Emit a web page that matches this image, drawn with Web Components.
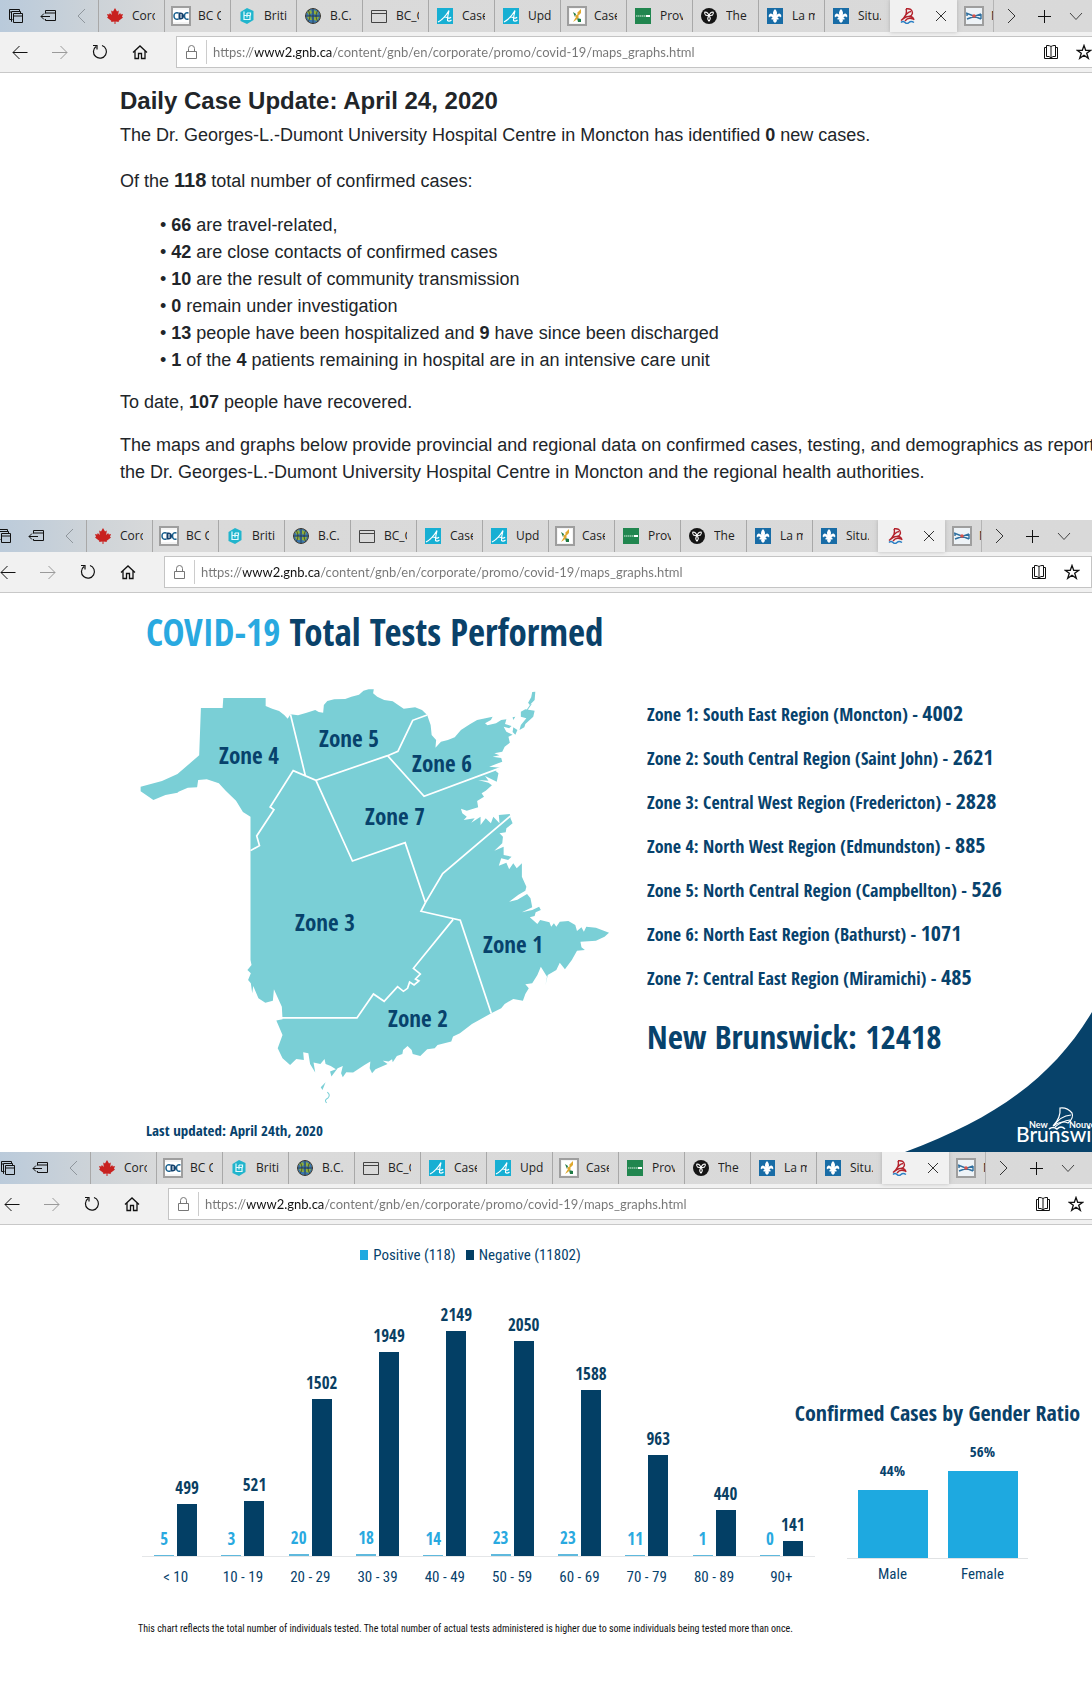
<!DOCTYPE html>
<html lang="en">
<head>
<meta charset="utf-8">
<title>New Brunswick COVID-19 maps and graphs</title>
<style>
  html { overflow-x: hidden; }
  body { margin: 0; background: #fff; overflow-x: hidden; }
</style>
</head>
<body>
<edge-window>
  <case-update></case-update>
</edge-window>
<edge-window style="--shift: -12px">
  <tests-infographic></tests-infographic>
</edge-window>
<edge-window style="--shift: -8px">
  <results-charts></results-charts>
</edge-window>

<template id="edge-window">
  <style>
    :host { display: block; overflow: hidden; font: 12px/16px "Open Sans", "Noto Sans", sans-serif; color: #222; }
    .chrome { width: calc(100% + 12px); margin-left: var(--shift, 0px); }
    button { all: unset; box-sizing: border-box; display: flex; align-items: center; justify-content: center; }
    svg { display: block; fill: none; stroke: #111; }
    .strip { display: flex; height: 32px; background: linear-gradient(90deg, #b9cadb, #cdd3d8 98px, #dadada 180px, #d9d9d9); }
    .tool { width: 32px; }
    .wide { width: 34px; }
    .nav { display: flex; align-items: center; height: 40px; background: #f1f1f1; border-bottom: 1px solid #c8c8c8; padding-left: 4px; }
    .nav > button { width: 40px; height: 32px; }
    .box { flex: 1; display: flex; align-items: center; height: 32px; box-sizing: border-box; margin-left: 12px; background: #fff; border: 1px solid #c4c4c4; padding-right: 3px; }
    .lock { width: 29px; display: flex; justify-content: center; }
    .url { flex: 1; min-width: 0; border: 0; border-left: 1px solid #ccc; outline: 0; padding: 0 0 0 6px; height: 24px; font: 13px/24px Lato, "Open Sans", sans-serif; color: #6e6e6e;
      background: linear-gradient(90deg, #767676 48px, #111 48px 125px, #767676 125px) text; -webkit-background-clip: text; -webkit-text-fill-color: transparent; }
    .box button { width: 33px; height: 28px; }
  </style>
  <div class="chrome">
    <div class="strip">
      <button class="tool" aria-label="Tabs you've set aside"><svg width="16" height="16" viewBox="0 0 16 16"><path d="M4.5 11.500H1.500V1.500H11.500V3.500M1.500 4H3M4 13.500H3.500V3.500H12.500V5.500M5.500 5.500H14.500V14.500H5.500ZM5.500 8H14.500"/></svg></button>
      <button class="tool" aria-label="Set these tabs aside"><svg width="16" height="16" viewBox="0 0 16 16"><path d="M5.500 5.500V2.500H15.500V12.500H5.500V11M5.500 5H15.500M10 8.500H1M4 5.500L1 8.500L4 11.500"/></svg></button>
      <button class="wide" aria-label="Scroll tabs left"><svg width="9" height="16" viewBox="0 0 9 16" style="stroke:#8f969c"><path d="M8 1L1 8L8 15"/></svg></button>
      <edge-tab icon="maple">Coro</edge-tab>
      <edge-tab icon="cdc">BC C</edge-tab>
      <edge-tab icon="hex">Briti</edge-tab>
      <edge-tab icon="globe">B.C.</edge-tab>
      <edge-tab icon="page">BC_C</edge-tab>
      <edge-tab icon="alberta">Case</edge-tab>
      <edge-tab icon="alberta">Upd</edge-tab>
      <edge-tab icon="wheat">Case</edge-tab>
      <edge-tab icon="prov">Prov</edge-tab>
      <edge-tab icon="trillium">The</edge-tab>
      <edge-tab icon="lys">La m</edge-tab>
      <edge-tab icon="lys">Situ.</edge-tab>
      <edge-tab icon="ship" active></edge-tab>
      <edge-tab icon="ns" narrow>N</edge-tab>
      <button class="wide" aria-label="Scroll tabs right"><svg width="9" height="16" viewBox="0 0 9 16" style="stroke:#333"><path d="M1 1L8 8L1 15"/></svg></button>
      <button class="tool" aria-label="New tab"><svg width="14" height="14" viewBox="0 0 14 14"><path d="M7.500 1V14M1 7.500H14"/></svg></button>
      <button class="tool" aria-label="Tab actions"><svg width="14" height="9" viewBox="0 0 14 9" style="stroke:#444"><path d="M1 1L7 7.500L13 1"/></svg></button>
    </div>
    <div class="nav">
      <button aria-label="Back" style="width:32px"><svg width="16" height="16" viewBox="0 0 16 16"><path d="M1 8.500H15.500M7.500 2L1 8.500L7.500 15"/></svg></button>
      <button aria-label="Forward" style="width:48px"><svg width="16" height="16" viewBox="0 0 16 16" style="stroke:#9a9a9a"><path d="M0 8.500H15M8.500 2L15 8.500L8.500 15"/></svg></button>
      <button aria-label="Refresh" style="width:32px"><svg width="16" height="16" viewBox="0 0 16 16"><path d="M10 1.500A6.500 6.500 0 1 1 4 2.500M1 1.500H5V5.500" stroke-width="1.200"/></svg></button>
      <button aria-label="Home" style="width:48px"><svg width="16" height="16" viewBox="0 0 16 16"><path d="M1 8.500L8 2L15 8.500M3 7V14.500H6.500V9.500H9.500V14.500H13V7" stroke-width="1.300"/></svg></button>
      <div class="box">
        <span class="lock"><svg width="11" height="14" viewBox="0 0 11 14" style="stroke:#777"><path d="M.5 6.500H10.500V13.500H.5ZM2.500 6.500V3.500A3 3 0 0 1 8.500 3.500V6.500"/></svg></span>
        <input class="url" type="text" aria-label="Address" value="https://www2.gnb.ca/content/gnb/en/corporate/promo/covid-19/maps_graphs.html">
        <button aria-label="Reading view"><svg width="16" height="16" viewBox="0 0 16 16"><path d="M8 2.500Q6.500 1.500 5 1.500H3.500V12.500H6L8 14L10 12.500H12.500V1.500H11Q9.500 1.500 8 2.500V14M3.500 3.500H1.500V14.500H14.500V3.500H12.500"/></svg></button>
        <button aria-label="Add to favourites"><svg width="16" height="16" viewBox="0 0 16 16"><path d="M8 1.500L9.700 6.300H14.800L10.700 9.300L12.300 14.300L8 11.200L3.700 14.300L5.300 9.300L1.200 6.300H6.300Z" stroke-width="1.300"/></svg></button>
      </div>
    </div>
  </div>
  <slot></slot>
</template>

<template id="edge-tab">
  <style>
    :host { display: block; flex: none; width: 66px; height: 32px; box-sizing: border-box; border-left: 1px solid #a8a8a8; overflow: hidden; }
    :host([active]) { width: 67px; border-left-color: #f1f1f1; background: #f1f1f1; box-shadow: 0 0 4px #8888; }
    :host([narrow]) { width: 37px; border-left-color: transparent; border-right: 1px solid #b4b4b4; }
    button { all: unset; display: flex; align-items: center; gap: 7px; height: 32px; padding-left: 6px; color: #222; }
    .icon { flex: none; display: flex; align-items: center; justify-content: center; width: 20px; height: 20px; box-sizing: border-box; }
    .icon.framed { border: 2px solid #9e9e9e; background: #f4f4f4; }
    .title { width: 23px; overflow: hidden; white-space: nowrap; font: 12px/16px "Open Sans", "Noto Sans", sans-serif; }
    .close { margin-left: 11px; display: block; }
    svg { display: block; }
  </style>
  <button><span class="icon"></span><span class="title"><slot></slot></span></button>
</template>

<template id="case-update">
  <style>
    :host { display: block; padding: 13px 0 34px 120px; overflow: hidden; font: 18px/27px "Liberation Sans", Arial, sans-serif; color: #212529; }
    h1 { margin: 0 0 6px; font-size: 24px; line-height: 30px; }
    p { margin: 0 0 16px; white-space: nowrap; }
    .lead { margin-bottom: 19px; }
    .big { font-size: 20px; line-height: 20px; }
    ul { margin: -2px 0 15px; padding: 0 0 0 40px; list-style: none; }
    li::before { content: "• "; }
  </style>
  <h1>Daily Case Update: April 24, 2020</h1>
  <p class="lead">The Dr. Georges-L.-Dumont University Hospital Centre in Moncton has identified <b>0</b> new cases.</p>
  <p class="lead">Of the <b class="big">118</b> total number of confirmed cases:</p>
  <ul>
    <li><b>66</b> are travel-related,</li>
    <li><b>42</b> are close contacts of confirmed cases</li>
    <li><b>10</b> are the result of community transmission</li>
    <li><b>0</b> remain under investigation</li>
    <li><b>13</b> people have been hospitalized and <b>9</b> have since been discharged</li>
    <li><b>1</b> of the <b>4</b> patients remaining in hospital are in an intensive care unit</li>
  </ul>
  <p>To date, <b>107</b> people have recovered.</p>
  <p style="margin:0">The maps and graphs below provide provincial and regional data on confirmed cases, testing, and demographics as reported by<br>the Dr. Georges-L.-Dumont University Hospital Centre in Moncton and the regional health authorities.</p>
</template>

<template id="tests-infographic">
  <style>
    :host { display: block; position: relative; padding: 17px 0 12px 140px; overflow: hidden; font: 700 18px/44px "Open Sans Condensed", "Roboto Condensed", sans-serif; color: #07426c; }
    h2 { margin: 0 0 26px 6px; font-size: 37px; line-height: 44px; color: #0a4169; }
    h2 span { color: #29a9e0; }
    .body { display: grid; grid-template-columns: 480px 1fr; column-gap: 27px; }
    ul { margin: 12px 0 15px; padding: 0; list-style: none; white-space: nowrap; }
    b { font-size: 22px; line-height: 22px; }
    .total { margin: 0; font-size: 33px; line-height: 44px; }
    .date { margin: 16px 0 0 6px; font-size: 15px; line-height: 20px; }
    .corner { position: absolute; right: 0; bottom: 0; }
    svg { display: block; }
  </style>
  <h2><span>COVID-19</span> Total Tests Performed</h2>
  <div class="body">
    <nb-map></nb-map>
    <div>
      <ul>
        <li>Zone 1: South East Region (Moncton) - <b>4002</b></li>
        <li>Zone 2: South Central Region (Saint John) - <b>2621</b></li>
        <li>Zone 3: Central West Region (Fredericton) - <b>2828</b></li>
        <li>Zone 4: North West Region (Edmundston) - <b>885</b></li>
        <li>Zone 5: North Central Region (Campbellton) - <b>526</b></li>
        <li>Zone 6: North East Region (Bathurst) - <b>1071</b></li>
        <li>Zone 7: Central East Region (Miramichi) - <b>485</b></li>
      </ul>
      <p class="total">New Brunswick: 12418</p>
    </div>
  </div>
  <p class="date">Last updated: April 24th, 2020</p>
  <svg class="corner" width="187" height="140" viewBox="0 0 187 140">
    <path d="M187 0C150 62 95 105 0 140H187Z" fill="#07426a"/>
    <g fill="none" stroke="#fff">
      <path d="M155 96Q162 95 167 101Q169 106 163 111Q157 108 148 114Q156 106 155 96Z" stroke-width="1.200"/>
      <path d="M149 114Q155 104 166 103M150 115Q157 109 165 108" stroke-width="1.200"/>
      <path d="M144 117Q148 114 152 117Q156 113 160 117" stroke-width="1.600"/>
    </g>
    <g fill="#fff" font-family="Lato, sans-serif">
      <text x="124" y="116" font-size="9">New</text>
      <text x="164" y="116" font-size="9">Nouve</text>
      <text x="111" y="130" font-size="21" font-weight="500">Brunswi</text>
    </g>
  </svg>
</template>

<template id="nb-map">
  <style>
    :host { display: block; }
    svg { display: block; }
    text { font: 700 23px "Open Sans Condensed", "Roboto Condensed", sans-serif; fill: #07426c; text-anchor: middle; }
  </style>
  <svg width="480" height="424" viewBox="140 680 480 424" role="img" aria-label="Health zones of New Brunswick">
    <g transform="translate(100 600) scale(.3444 .3333)">
      <path fill="#7acfd6" d="M358 294L481 294 481 318 500 326 520 333 535 345 545 356 553 343 575 346 600 338 625 330 635 336 648 338 650 315 660 303 680 298 712 297 730 290 752 284 765 272 780 268 795 268 793 280 805 290 825 300 850 304 870 318 882 326 915 322 935 330 950 345 960 375 963 405 976 420 974 443 990 425 1010 420 1030 412 1048 390 1075 372 1095 360 1140 350 1135 360 1118 370 1125 376 1150 370 1165 360 1180 358 1176 372 1195 378 1188 385 1172 380 1180 395 1198 404 1186 410 1190 428 1175 440 1168 455 1145 460 1160 466 1140 470 1165 474 1168 485 1130 500 1165 503 1148 512 1157 520 1152 545 1118 528 1128 542 1098 540 1128 548 1138 556 1120 572 1108 580 1115 590 1095 603 1098 622 1065 632 1048 626 1052 640 1065 650 1056 660 1088 655 1078 668 1105 650 1105 675 1120 655 1135 670 1142 650 1160 670 1158 645 1190 642 1192 655 1198 670 1180 685 1178 697 1160 700 1170 710 1168 730 1145 752 1172 740 1172 765 1195 770 1185 780 1165 775 1158 797 1180 788 1188 808 1200 790 1210 805 1225 790 1225 830 1238 860 1235 872 1215 884 1188 905 1212 899 1240 882 1250 895 1255 922 1225 937 1255 930 1275 920 1280 930 1265 937 1262 948 1248 952 1270 972 1278 960 1305 967 1310 980 1318 970 1325 980 1335 965 1360 963 1380 975 1385 993 1398 982 1405 995 1412 980 1440 983 1478 998 1465 1010 1440 1022 1395 1025 1398 1042 1408 1050 1385 1052 1370 1080 1350 1108 1335 1088 1325 1110 1300 1125 1293 1158 1298 1130 1280 1100 1270 1125 1255 1150 1235 1153 1245 1165 1235 1182 1228 1202 1200 1197 1175 1212 1165 1225 1136 1240 1080 1272 1045 1300 1025 1310 1020 1325 980 1335 972 1345 950 1348 930 1368 908 1362 905 1350 893 1338 880 1350 878 1362 862 1368 850 1387 848 1378 838 1385 818 1382 832 1373 840 1378 818 1380 835 1392 800 1408 790 1420 783 1405 785 1385 768 1395 735 1418 715 1417 705 1432 700 1420 705 1398 690 1405 672 1430 668 1415 685 1408 670 1398 655 1392 652 1377 640 1392 620 1388 625 1418 610 1392 605 1360 590 1357 592 1380 570 1377 552 1395 530 1375 516 1345 530 1305 512 1262 530 1258 528 1220 505 1168 502 1202 480 1208 460 1195 445 1158 442 1180 438 1150 430 1140 438 1120 428 1110 440 1095 437 1080 437 650 415 636 395 602 365 572 345 550 310 538 285 540 282 562 255 563 228 575 225 578 190 585 155 600 118 574 118 560 180 543 225 522 288 466 293 324 356 324Z
        M1255 276L1264 275 1262 300 1248 315 1243 308 1252 292ZM1222 335L1235 328 1262 332 1258 350 1235 372 1232 382 1218 390 1222 375 1238 355 1222 350ZM1198 352L1206 350 1200 360ZM1200 382L1212 390 1206 404 1198 396ZM655 1447L646 1470 641 1462Z"/>
      <path fill="none" stroke="#7acfd6" stroke-width="3" d="M1252 312L1240 330M660 1477Q670 1484 662 1494Q650 1500 658 1509"/>
      <path fill="none" stroke="#fff" stroke-width="5" d="M553 343L596 526M437 752L463 737 455 708 505 629 494 621 561 512 627 541 835 467 865 454 908 361 950 345M627 541L733 783 886 728 945 908M835 467L941 589 1165 503M1192 648L995 821 945 908 932 934 1046 961 1136 1240M1025 959L910 1105 930 1122 916 1137 926 1143 912 1155 899 1146 893 1165 881 1174 864 1160 825 1204 794 1182 746 1254 520 1254"/>
    </g>
    <text x="249" y="764">Zone 4</text>
    <text x="349" y="747">Zone 5</text>
    <text x="442" y="772">Zone 6</text>
    <text x="395" y="825">Zone 7</text>
    <text x="325" y="931">Zone 3</text>
    <text x="513" y="953">Zone 1</text>
    <text x="418" y="1027">Zone 2</text>
  </svg>
</template>

<template id="results-charts">
  <style>
    :host { display: block; padding: 20px 0 48px 138px; overflow: hidden; font: 15px/20px "Roboto Condensed", "Open Sans Condensed", sans-serif; color: #07426c; }
    .row { display: flex; align-items: flex-end; gap: 32px; padding-left: 4px; }
    .note { margin: 35px 0 0; font-size: 10px; line-height: 14px; color: #111; white-space: nowrap; }
  </style>
  <div class="row">
    <age-chart></age-chart>
    <gender-chart></gender-chart>
  </div>
  <p class="note">This chart reflects the total number of individuals tested. The total number of actual tests administered is higher due to some individuals being tested more than once.</p>
</template>

<template id="age-chart">
  <style>
    :host { display: block; width: 673px; }
    figure { margin: 0; }
    .legend { display: flex; justify-content: center; gap: 10px; padding-right: 16px; }
    .legend span { display: flex; align-items: center; gap: 5px; white-space: nowrap; }
    .legend i { width: 8px; height: 10px; background: var(--c); }
    .plot { display: flex; height: 291px; align-items: flex-end; border-bottom: 1px solid #e4e6e8; }
    .names { display: flex; margin-top: 10px; }
    .names span { flex: 1 1 0; text-align: center; }
  </style>
  <figure>
    <figcaption class="legend"><span style="--c:#1fa9e0"><i></i>Positive (118)</span><span style="--c:#033f65"><i></i>Negative (11802)</span></figcaption>
    <div class="plot"></div>
    <div class="names"></div>
  </figure>
</template>

<template id="age-group">
  <style>
    :host { flex: 1 1 0; display: flex; align-items: flex-end; justify-content: center; gap: 3px; font: 700 17px/20px "Open Sans Condensed", "Roboto Condensed", sans-serif; }
    div { display: flex; flex-direction: column; align-items: center; gap: 6px; width: 20px; }
    i { display: block; width: 20px; }
    .pos { color: #29a9e0; } .pos i { background: #5fb9dd; }
    .neg { color: #0a3f63; } .neg i { background: #033f65; }
  </style>
  <div class="pos"><span></span><i></i></div>
  <div class="neg"><span></span><i></i></div>
</template>

<template id="gender-chart">
  <style>
    :host { display: flex; flex-direction: column; align-items: center; width: 181px; margin-bottom: 3px; }
    h3 { margin: 0; font: 700 22px/30px "Open Sans Condensed", "Roboto Condensed", sans-serif; white-space: nowrap; color: #0a4169; }
    .plot { display: flex; justify-content: center; align-items: flex-end; gap: 20px; width: 100%; height: 131px; border-bottom: 1px solid #e0e2e4; }
    .bar { display: flex; flex-direction: column; align-items: center; gap: 10px; width: 70px; font-family: "Open Sans Condensed", "Roboto Condensed", sans-serif; font-weight: 700; }
    .bar i { width: 100%; background: #1ea9e0; }
    .names { display: flex; gap: 20px; margin-top: 5px; }
    .names span { width: 70px; text-align: center; }
  </style>
  <h3>Confirmed Cases by Gender Ratio</h3>
  <div class="plot">
    <div class="bar"><span>44%</span><i style="height:68px"></i></div>
    <div class="bar"><span>56%</span><i style="height:87px"></i></div>
  </div>
  <div class="names"><span>Male</span><span>Female</span></div>
</template>

<script>
const framed = ["cdc", "wheat", "ns"];
const icons = {
  maple: `<path fill="#c8211f" d="M8 0L10 3.500 11.800 2.600 11.200 7 13.200 5 13.800 6.400 16 6 15 8.800 16 9.600 11.500 13 12 14 8.500 13.500V16H7.500V13.500L4 14 4.500 13 0 9.600 1 8.800 0 6 2.200 6.400 2.800 5 4.800 7 4.200 2.600 6 3.500Z"/>`,
  cdc: `<rect y="2" width="16" height="12" fill="#fff"/><path fill="none" stroke="#17608f" stroke-width="1.500" d="M5.500 5Q1 4 1 8T5.500 11M15.500 5Q11.500 4 11.500 8T15.500 11"/><path fill="#123f6b" d="M5.500 4.500H8Q11 5 11 8T8 11.500H5.500Z"/><path stroke="#fff" d="M8 6V10"/>`,
  hex: `<path fill="#21b5cd" d="M8 0L14.500 3V12L8 16 1.500 13V4Z"/><path fill="none" stroke="#e6fafd" stroke-width="1.200" d="M5 3.500V11.500H11V7.500H5M8 5V9.500M8 5H11.500V7.500"/>`,
  globe: `<circle cx="8" cy="8" r="7.500" fill="#3b78ad" stroke="#4a4438"/><path fill="#8fae3c" d="M2 4L6 2 7 5 4 7ZM9 2L13 4 12 7 9 6ZM2 9L6 8 7 12 4 12ZM9 9L14 9 12 13 9 12Z"/><path fill="none" stroke="#222" stroke-width=".6" d="M8 0V16M0 8H16M3 2Q7 8 3 14M13 2Q9 8 13 14"/>`,
  page: `<path fill="none" stroke="#444" d="M.5 2.500H15.500V14.500H.5ZM.5 5.500H15.500"/>`,
  alberta: `<rect width="16" height="16" fill="#17afd3"/><path fill="none" stroke="#fff" stroke-width="1.100" d="M1 14Q7 11 12 2.500Q10.500 8 10.500 12.500Q12 14 14.500 12M5 11.500Q7 8 10 9.500T14 9"/>`,
  wheat: `<rect x="1" y="1" width="14" height="14" fill="#fff"/><path fill="#1f7a45" d="M4 4L7 6 6 9ZM8 10L12 11V14H9Z"/><path fill="#e0a92f" d="M12 1L8 5 9 6 6 8 7 9 4 14 7 12 10 9 9 8 12 5Z"/>`,
  prov: `<rect width="16" height="16" fill="#21864f"/><path stroke="#d9efe2" stroke-width="1.200" stroke-dasharray="1.500 .5" d="M1 8H11"/><path stroke="#fff" stroke-width="2" d="M11 8H15"/>`,
  trillium: `<circle cx="8" cy="8" r="8" fill="#151515"/><path fill="none" stroke="#fff" stroke-width="1.100" d="M8 8L4.500 7Q3 5 4 4Q7 4 8 8Q9 4 12 4Q13 5 11.500 7ZM8 8Q5.500 10.500 8 13Q10.500 10.500 8 8Z"/>`,
  lys: `<rect width="16" height="16" fill="#186ca6"/><path fill="#fff" d="M8 1Q11.500 4.500 9 8.500Q10 5.500 12.500 5.500Q15 6.500 14 9.500Q13 8 11.500 8.500Q10.500 9 10.500 10H11.500V11.500H9.500L10 13 8 15 6 13 6.500 11.500H4.500V10H5.500Q5.500 9 4.500 8.500Q3 8 2 9.500Q1 6.500 3.500 5.500Q6 5.500 7 8.500Q4.500 4.500 8 1Z"/>`,
  ship: `<path fill="none" stroke="#b3202a" stroke-width="1.400" d="M7 .8Q13 0 13.500 5Q13 8 10 8.500M7 .8Q9 7 2 12.500Q7 8 10 8.500Q14 8 15 12M4 11Q8 4 12 3.500M6 13Q9 9 14 11"/><path fill="none" stroke="#2a7fc4" stroke-width="1.500" d="M2 14.500Q4 12.500 6 14.500T10 14.500T15 14.500"/>`,
  ns: `<rect width="16" height="16" fill="#eef3f7"/><path fill="none" stroke="#2f6f9f" stroke-width="1.400" d="M0 5L15 11M1 11L15 6M1 5V8M15 6V11"/><circle cx="8" cy="8" r="1.800" fill="#d9534a"/>`
};
const fragment = id => document.getElementById(id).content.cloneNode(true);
class Base extends HTMLElement {
  constructor() {
    super();
    this.attachShadow({ mode: "open" }).append(fragment(this.localName));
  }
}
class EdgeTab extends Base {
  connectedCallback() {
    const name = this.getAttribute("icon");
    const icon = this.shadowRoot.querySelector(".icon");
    icon.classList.toggle("framed", framed.includes(name));
    icon.innerHTML = `<svg width="16" height="16" viewBox="0 0 16 16">${icons[name]}</svg>`;
    if (this.hasAttribute("active")) {
      this.shadowRoot.querySelector("button").setAttribute("aria-label", "COVID-19 maps and graphs");
      this.shadowRoot.querySelector(".title").innerHTML = `<svg class="close" width="12" height="12" viewBox="0 0 12 12"><path d="M1 1L11 11M11 1L1 11" stroke="#333" fill="none"/></svg>`;
    }
  }
}
class AgeGroup extends Base {
  connectedCallback() {
    for (const kind of ["pos", "neg"]) {
      const value = Number(this.getAttribute(kind));
      const part = this.shadowRoot.querySelector("." + kind);
      part.querySelector("span").textContent = value;
      part.querySelector("i").style.height = Math.max(1, Math.round(value * 225 / 2149)) + "px";
    }
  }
}
class AgeChart extends Base {
  connectedCallback() {
    const data = [["< 10", 5, 499], ["10 - 19", 3, 521], ["20 - 29", 20, 1502], ["30 - 39", 18, 1949], ["40 - 49", 14, 2149],
      ["50 - 59", 23, 2050], ["60 - 69", 23, 1588], ["70 - 79", 11, 963], ["80 - 89", 1, 440], ["90+", 0, 141]];
    for (const [name, pos, neg] of data) {
      const group = document.createElement("age-group");
      group.setAttribute("pos", pos);
      group.setAttribute("neg", neg);
      this.shadowRoot.querySelector(".plot").append(group);
      const label = document.createElement("span");
      label.textContent = name;
      this.shadowRoot.querySelector(".names").append(label);
    }
  }
}
customElements.define("edge-tab", EdgeTab);
customElements.define("age-group", AgeGroup);
customElements.define("age-chart", AgeChart);
for (const name of ["nb-map", "gender-chart", "case-update", "tests-infographic", "results-charts", "edge-window"])
  customElements.define(name, class extends Base {});
</script>
</body>
</html>
